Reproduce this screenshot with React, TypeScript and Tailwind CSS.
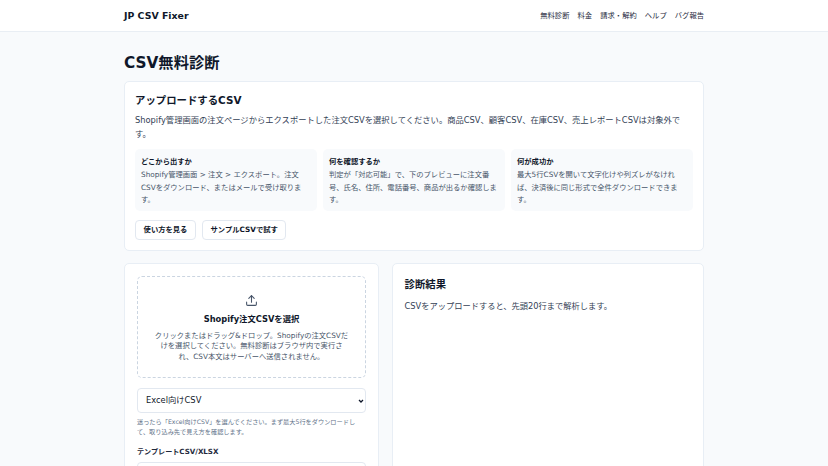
import React from "react";

const boxes = [
  { t: "どこから出すか", b: "Shopify管理画面 > 注文 > エクスポート。注文CSVをダウンロード、またはメールで受け取ります。" },
  { t: "何を確認するか", b: "判定が「対応可能」で、下のプレビューに注文番号、氏名、住所、電話番号、商品が出るか確認します。" },
  { t: "何が成功か", b: "最大5行CSVを開いて文字化けや列ズレがなければ、決済後に同じ形式で全件ダウンロードできます。" },
];

const nav = ["無料診断", "料金", "請求・解約", "ヘルプ", "バグ報告"];

export default function App() {
  return (
    <div className="h-[466px] overflow-hidden bg-[#f8fafc] text-[#0f172a] font-['DejaVu_Sans','Noto_Sans_CJK_JP',sans-serif]">
      <header className="h-[32px] bg-white border-b border-[#e9eef4]">
        <div className="w-[580px] mx-auto h-full flex items-center justify-between pt-[1px]">
          <span className="text-[9.4px] font-bold">JP CSV Fixer</span>
          <nav className="flex gap-[8.1px] text-[7.3px] text-[#1e293b]">
            {nav.map((n) => (
              <span key={n}>{n}</span>
            ))}
          </nav>
        </div>
      </header>
      <main className="w-[580px] mx-auto">
        <h1 className="text-[15.3px] font-bold mt-[19px] leading-[24px]">CSV無料診断</h1>
        <section className="mt-[6px] h-[170px] bg-white border border-[#e8eef5] rounded-[5px] px-[10px] pt-[10px]">
          <h2 className="text-[10.4px] font-bold leading-[16px]">アップロードするCSV</h2>
          <p className="text-[8.3px] leading-[14.2px] mt-[5px] text-[#334155]">
            Shopify管理画面の注文ページからエクスポートした注文CSVを選択してください。商品CSV、顧客CSV、在庫CSV、売上レポートCSVは対象外です。
          </p>
          <div className="grid grid-cols-3 gap-[6px] mt-[8px]">
            {boxes.map((x) => (
              <div key={x.t} className="h-[62px] bg-[#f8fafc] rounded-[5px] px-[6px] pt-[6.5px]">
                <div className="text-[7.3px] font-bold leading-[12px] text-[#0f172a]">{x.t}</div>
                <p className="text-[7.3px] leading-[12.6px] text-[#475569] mt-[1px]">{x.b}</p>
              </div>
            ))}
          </div>
          <div className="flex gap-[6px] mt-[9px]">
            <button className="h-[20px] px-[7.6px] pt-[1px] bg-white border-[1.5px] border-[#e2e8f0] rounded-[4px] text-[7.3px] font-bold">使い方を見る</button>
            <button className="h-[20px] px-[7.6px] pt-[1px] bg-white border-[1.5px] border-[#e2e8f0] rounded-[4px] text-[7.3px] font-bold">サンプルCSVで試す</button>
          </div>
        </section>
        <div className="grid grid-cols-[255px_312px] gap-[13px] mt-[12px]">
          <section className="h-[300px] bg-white border border-[#e8eef5] rounded-[5px] px-[12px] pt-[12px]">
            <div className="h-[102px] border-[1.5px] border-dashed border-[#cbd5e1] rounded-[5px] flex flex-col items-center pt-[17px] text-center px-[16px]">
              <svg width="13" height="13" viewBox="0 0 24 24" fill="none" stroke="#475569" strokeWidth="2" strokeLinecap="round" strokeLinejoin="round">
                <path d="M12 15V3" />
                <path d="M21 15v4a2 2 0 0 1-2 2H5a2 2 0 0 1-2-2v-4" />
                <path d="m17 8-5-5-5 5" />
              </svg>
              <div className="text-[8.3px] font-bold leading-[14px] mt-[5px]">Shopify注文CSVを選択</div>
              <p className="text-[7.3px] leading-[10.4px] text-[#475569] mt-[5px]">
                クリックまたはドラッグ&ドロップ。Shopifyの注文CSVだけを選択してください。無料診断はブラウザ内で実行され、CSV本文はサーバーへ送信されません。
              </p>
            </div>
            <div className="relative mt-[10px]">
              <select className="block w-full h-[25px] appearance-none border-[1.5px] border-[#e2e8f0] rounded-[4px] bg-white pl-[8px] text-[8.3px] text-[#0f172a]">
                <option>Excel向けCSV</option>
              </select>
              <svg className="absolute right-[2px] top-[9.5px]" width="6" height="6" viewBox="0 0 24 24" fill="none" stroke="#0f172a" strokeWidth="5"><path d="m4 8 8 8 8-8" /></svg>
            </div>
            <p className="text-[6.2px] leading-[10.4px] text-[#64748b] mt-[4px]">
              迷ったら「Excel向けCSV」を選んでください。まず最大5行をダウンロードして、取り込み先で見え方を確認します。
            </p>
            <div className="text-[7.1px] font-bold leading-[12px] mt-[8px] text-[#1e293b]">テンプレートCSV/XLSX</div>
            <div className="h-[25px] mt-[4px] border-[1.5px] border-[#e2e8f0] rounded-[4px]" />
          </section>
          <section className="h-[300px] bg-white border border-[#e8eef5] rounded-[5px] px-[11.5px] pt-[12px]">
            <h2 className="text-[10.4px] font-bold leading-[16px]">診断結果</h2>
            <p className="text-[8.25px] leading-[14px] mt-[7px] text-[#334155]">CSVをアップロードすると、先頭20行まで解析します。</p>
          </section>
        </div>
      </main>
    </div>
  );
}
